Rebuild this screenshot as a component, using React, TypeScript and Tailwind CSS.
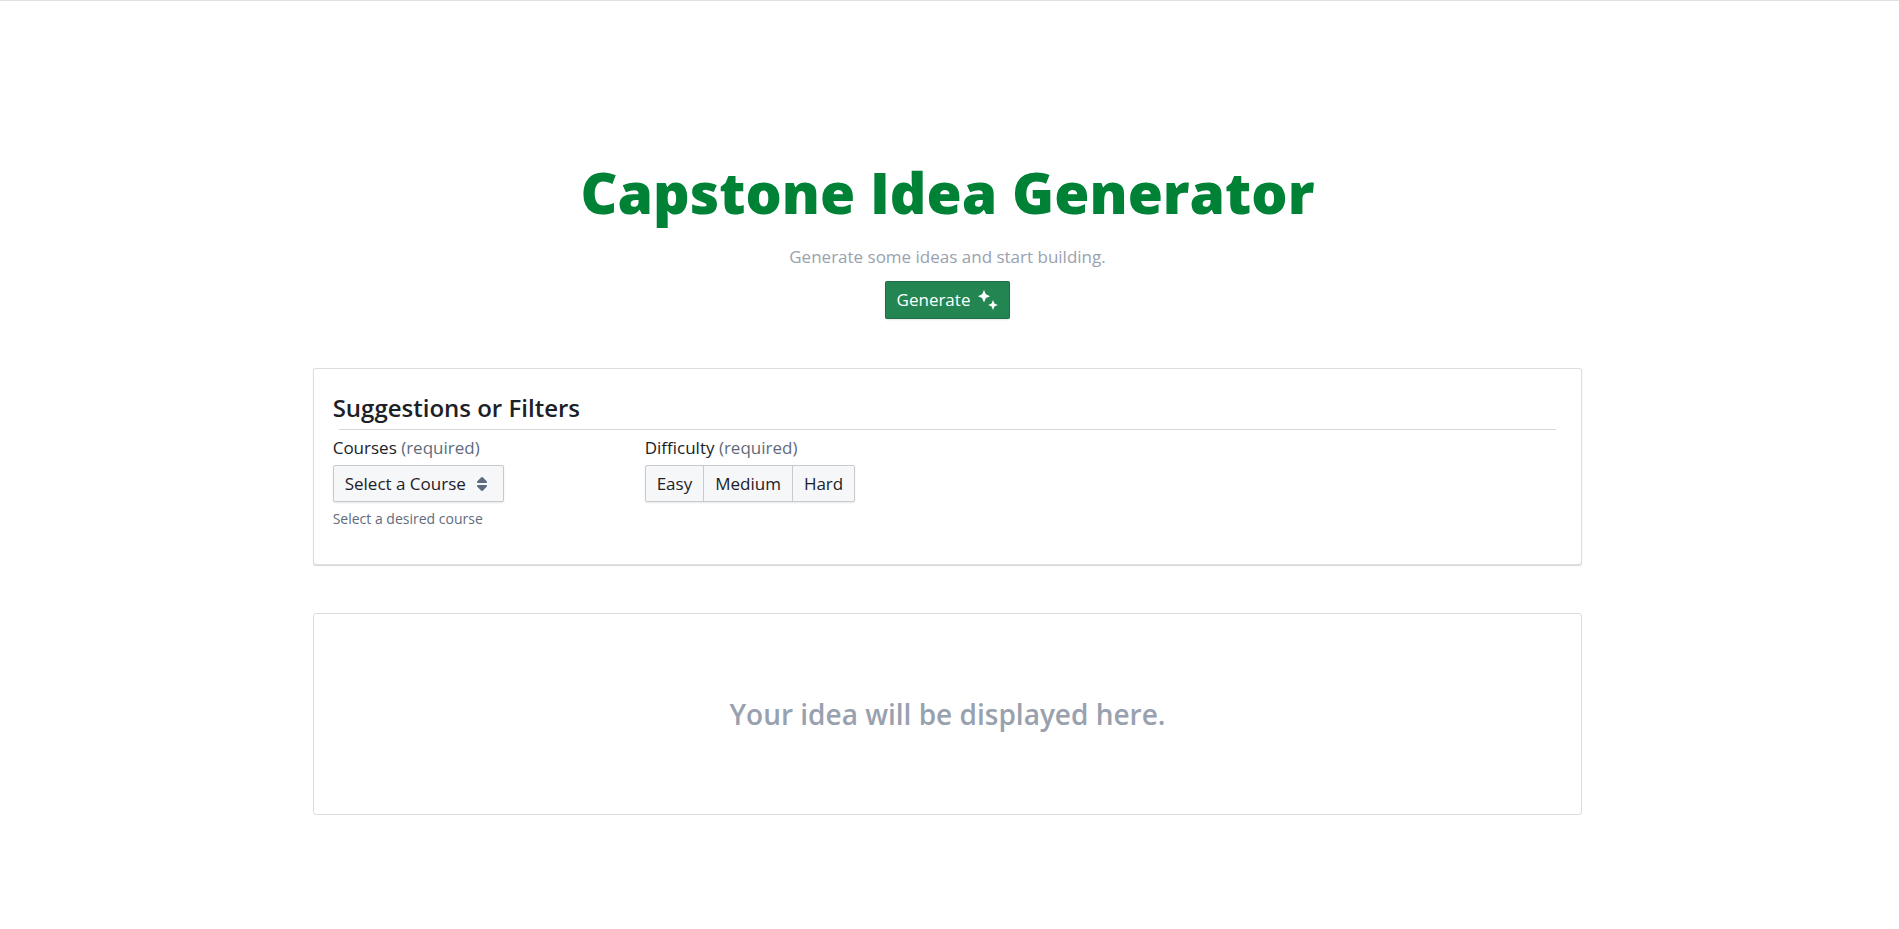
import React from "react";

function Sparkles() {
  return (
    <svg aria-hidden="true" width="20" height="20" viewBox="0 0 20 20" fill="#ffffff">
      <path d="M6 0L7.9 4.3L12 6.2L7.9 8.1L6 12.4L4.1 8.1L0 6.2L4.1 4.3Z" />
      <path d="M15 10L16.4 13.4L19.8 15L16.4 16.4L15 20L13.6 16.4L10.2 15L13.6 13.4Z" />
    </svg>
  );
}

function DoubleCaret() {
  return (
    <svg
      aria-hidden="true"
      className="pointer-events-none absolute top-1/2 right-[14px] -translate-y-1/2"
      width="16"
      height="16"
      viewBox="0 0 16 16"
      fill="#5f6b7c"
    >
      <path d="M4 7h8a1 1 0 0 0 .71-1.71l-4-4a1 1 0 0 0-1.41 0l-4 4A1 1 0 0 0 4 7zm8 2H4a1 1 0 0 0-.71 1.71l4 4a1 1 0 0 0 1.41 0l4-4A1 1 0 0 0 12 9z" />
    </svg>
  );
}

const levels = ["Easy", "Medium", "Hard"];

export default function App() {
  return (
    <div className="min-h-screen border-t border-[#dfdfe6] bg-white pr-1 font-['Open_Sans','Noto_Sans',sans-serif] text-[17px] leading-6 text-[#1c2127]">
      <main className="mx-auto flex w-[67%] flex-col pt-[154px]">
        <header className="flex flex-col items-center">
          <h1 className="text-[57px] leading-[74px] font-black text-[#008236]">
            Capstone Idea Generator
          </h1>
          <p className="mt-4 text-[#99a1af]">Generate some ideas and start building.</p>
          <button
            type="button"
            className="mt-3 flex h-[38px] items-center gap-2 rounded-[2px] bg-[#238551] px-3 text-white shadow-[inset_0_0_0_1px_rgba(17,20,24,0.2),0_1px_2px_rgba(17,20,24,0.1)]"
          >
            Generate
            <Sparkles />
          </button>
        </header>

        <section className="mt-[49px] rounded-[3px] px-5 pt-6 pb-8 shadow-[inset_0_0_0_1px_rgba(17,20,24,0.14),0_1px_1px_rgba(17,20,24,0.16)]">
          <h2 className="text-2xl leading-8 font-semibold">Suggestions or Filters</h2>
          <hr className="mx-[6px] mt-[5px] border-[#d6d8db]" />
          <div className="mt-[6px] flex">
            <div className="w-[312px]">
              <label htmlFor="course" className="block">
                Courses <span className="text-[#5f6b7c]">(required)</span>
              </label>
              <div className="relative mt-[5px] w-[171px]">
                <select
                  id="course"
                  className="block h-[37px] w-full appearance-none rounded-[2px] bg-[#f6f7f9] pl-3 shadow-[inset_0_0_0_1px_rgba(17,20,24,0.2),0_1px_2px_rgba(17,20,24,0.1)]"
                >
                  <option>Select a Course</option>
                </select>
                <DoubleCaret />
              </div>
              <p className="mt-[5px] pb-[2px] text-sm leading-6 text-[#5f6b7c]">Select a desired course</p>
            </div>
            <div role="group" aria-labelledby="difficulty">
              <div id="difficulty">
                Difficulty <span className="text-[#5f6b7c]">(required)</span>
              </div>
              <div className="mt-[5px] inline-flex h-[37px] divide-x divide-[#c8cacd] rounded-[2px] border border-[#c8cacd] bg-[#f6f7f9] shadow-[0_1px_2px_rgba(17,20,24,0.1)]">
                {levels.map((level) => (
                  <button key={level} type="button" className="px-[11px]">
                    {level}
                  </button>
                ))}
              </div>
            </div>
          </div>
        </section>

        <section className="mt-12 rounded-[3px] border border-[#dbdcdd] px-5 py-[82px]">
          <p className="text-center text-[28px] leading-9 font-semibold text-[#99a1af]">
            Your idea will be displayed here.
          </p>
        </section>
      </main>
    </div>
  );
}
